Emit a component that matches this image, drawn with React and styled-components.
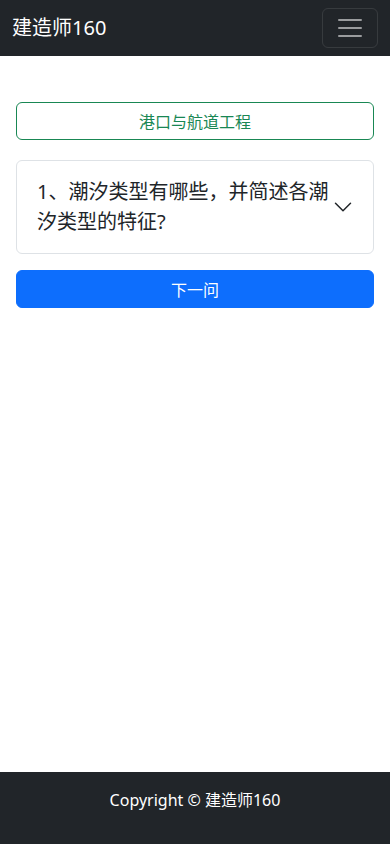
import React from 'react';
import styled, { createGlobalStyle } from 'styled-components';

const GlobalStyle = createGlobalStyle`
  * { box-sizing: border-box; }
  body {
    margin: 0;
    font-family: "Noto Sans", "Noto Sans CJK SC", sans-serif;
    color: #212529;
    background: #fff;
  }
`;

const Page = styled.div`
  min-height: 844px;
  display: flex;
  flex-direction: column;
`;

const Navbar = styled.nav`
  height: 56px;
  background: #212529;
  display: flex;
  align-items: center;
  justify-content: space-between;
  padding: 0 12px;
`;

const Brand = styled.a`
  color: #fff;
  font-size: 20px;
  line-height: 30px;
  text-decoration: none;
`;

const Toggler = styled.button`
  width: 56px;
  height: 40px;
  padding: 4px 12px;
  background: transparent;
  border: 1px solid rgba(255, 255, 255, 0.1);
  border-radius: 6px;
  display: flex;
  align-items: center;
  justify-content: center;
`;

const Main = styled.main`
  flex: 1;
  padding: 46px 16px 0;
  display: flex;
  flex-direction: column;
`;

const Button = styled.button`
  width: 100%;
  height: 38px;
  font-family: inherit;
  font-size: 16px;
  border-radius: 6px;
  border: 1px solid ${p => (p.$outline ? '#198754' : '#0d6efd')};
  background: ${p => (p.$outline ? '#fff' : '#0d6efd')};
  color: ${p => (p.$outline ? '#198754' : '#fff')};
  margin-bottom: ${p => p.$mb || 0}px;
`;

const Accordion = styled.div`
  border: 1px solid #dee2e6;
  border-radius: 6px;
  margin-bottom: 16px;
`;

const AccordionButton = styled.div`
  display: flex;
  align-items: center;
  padding: 16px 20px;
  font-size: 20px;
  line-height: 30px;
  color: #212529;
`;

const Question = styled.span`
  flex: 1;
  padding-right: 4px;
`;

const Footer = styled.footer`
  height: 72px;
  background: #212529;
  color: #fff;
  font-size: 16px;
  display: flex;
  justify-content: center;
  padding-top: 16px;
  line-height: 24px;
`;

function Chevron() {
  return (
    <svg width="20" height="20" viewBox="0 0 16 16" fill="none">
      <path d="M2 5l6 6 6-6" stroke="#212529" strokeWidth="1.2" strokeLinecap="round" strokeLinejoin="round" />
    </svg>
  );
}

function Burger() {
  return (
    <svg width="30" height="30" viewBox="0 0 30 30">
      <path d="M4 7h22M4 15h22M4 23h22" stroke="rgba(255,255,255,0.55)" strokeWidth="2" strokeLinecap="round" />
    </svg>
  );
}

export default function App() {
  return (
    <Page>
      <GlobalStyle />
      <Navbar>
        <Brand href="#">建造师160</Brand>
        <Toggler aria-label="menu"><Burger /></Toggler>
      </Navbar>
      <Main>
        <Button $outline $mb={20}>港口与航道工程</Button>
        <Accordion>
          <AccordionButton>
            <Question>1、潮汐类型有哪些，并简述各潮汐类型的特征?</Question>
            <Chevron />
          </AccordionButton>
        </Accordion>
        <Button>下一问</Button>
      </Main>
      <Footer>Copyright © 建造师160</Footer>
    </Page>
  );
}
